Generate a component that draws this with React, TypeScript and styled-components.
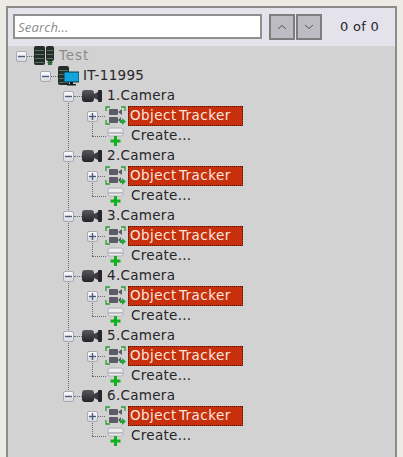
import React from 'react';
import styled, { createGlobalStyle } from 'styled-components';

const GlobalStyle = createGlobalStyle`
  html, body {
    margin: 0;
    padding: 0;
    height: 457px;
    overflow: hidden;
    background: #ecebe6;
  }
  * {
    box-sizing: border-box;
  }
`;

const Page = styled.div`
  height: 457px;
  padding: 6px 6px 0;
  font-family: 'DejaVu Sans', Verdana, sans-serif;
  font-size: 13.5px;
  color: #26262a;
`;

const Panel = styled.div`
  height: 100%;
  display: flex;
  flex-direction: column;
  border: 2px solid #8c8c8c;
  border-bottom: none;
`;

const Toolbar = styled.div`
  flex: none;
  height: 38px;
  display: flex;
  align-items: flex-start;
  padding: 6px 0 0 5px;
  background: #e4e2ea;
`;

const SearchBox = styled.div`
  width: 249px;
  height: 25px;
  display: flex;
  align-items: center;
  padding-left: 3px;
  border: 2px solid #909090;
  background: #ffffff;
  font-family: 'Open Sans', sans-serif;
  font-style: italic;
  font-size: 13px;
  letter-spacing: 0.2px;
  color: #8b8b8b;
`;

const NavGroup = styled.div`
  display: flex;
  margin-left: 7px;
  gap: 1px;
`;

const NavButton = styled.div`
  width: 26px;
  height: 26px;
  display: flex;
  align-items: center;
  justify-content: center;
  border: 2px solid #7e7e7e;
  background: #bdbcc3;
`;

const Counter = styled.div`
  margin: 5px 0 0 18px;
  font-size: 13px;
  letter-spacing: 0.3px;
`;

const Tree = styled.div`
  flex: 1;
  background: #d2d2d2;
`;

const Branch = styled.div<{ $left: number; $top: number; $bottom: number }>`
  position: relative;

  &::before {
    content: '';
    position: absolute;
    left: ${({ $left }) => $left}px;
    top: ${({ $top }) => $top}px;
    bottom: ${({ $bottom }) => $bottom}px;
    border-left: 1px dotted #6c6c6c;
  }
`;

const Row = styled.div<{ $indent: number }>`
  height: 20px;
  display: flex;
  align-items: center;
  padding-left: ${({ $indent }) => $indent}px;
`;

const Expander = styled.div`
  position: relative;
  z-index: 1;
  flex: none;
  width: 11px;
  height: 11px;
  display: flex;
  align-items: center;
  justify-content: center;
  border: 1px solid #a9a9b4;
  border-radius: 2px;
  background: linear-gradient(#fbfbfd, #d9d9e2);
`;

const Connector = styled.div<{ $width: number }>`
  flex: none;
  width: ${({ $width }) => $width}px;
  border-top: 1px dotted #6c6c6c;
`;

const IconSlot = styled.div`
  flex: none;
  width: 21px;
  height: 20px;
  display: flex;
`;

const Label = styled.span<{ $muted?: boolean }>`
  margin-left: 4px;
  padding-bottom: 2px;
  white-space: nowrap;
  letter-spacing: ${({ $muted }) => ($muted ? '0.9px' : '0.3px')};
  color: ${({ $muted }) => ($muted ? '#8c8c8c' : '#26262a')};
`;

const TrackerLabel = styled.span`
  flex: none;
  width: 115px;
  height: 20px;
  margin-left: 2px;
  padding-left: 1px;
  line-height: 16px;
  white-space: nowrap;
  word-spacing: -2.5px;
  letter-spacing: 0.45px;
  border: 1px dotted #4a1408;
  background: #c8300d;
  color: #f6e6df;
`;

const Sign = ({ open }: { open: boolean }) => (
  <svg width="7" height="7" viewBox="0 0 7 7">
    <rect x="0" y="2.8" width="7" height="1.4" fill="#4d5a78" />
    {!open && <rect x="2.8" y="0" width="1.4" height="7" fill="#4d5a78" />}
  </svg>
);

const Rack = ({ x, w, h }: { x: number; w: number; h: number }) => (
  <g>
    <rect x={x} y={0} width={w} height={h} rx="2" fill="#262c29" />
    <rect x={x + 1} y={4} width={w - 2} height="1" fill="#55755e" />
    <rect x={x + 1} y={8} width={w - 2} height="1" fill="#55755e" />
    <rect x={x + 1} y={12} width={w - 2} height="1" fill="#55755e" />
    <rect x={x + 1} y={16} width={w - 2} height="1" fill="#55755e" />
  </g>
);

const ServersIcon = () => (
  <svg width="21" height="20" viewBox="0 0 21 20">
    <Rack x={0} w={11} h={19} />
    <Rack x={12} w={8} h={15} />
    <rect x="14" y="15" width="4" height="4" fill="#2f6a3c" />
  </svg>
);

const ServerIcon = () => (
  <svg width="21" height="20" viewBox="0 0 21 20">
    <Rack x={0} w={11} h={19} />
    <rect x="6" y="6" width="15" height="10" fill="#12a4da" stroke="#0d3a4c" />
    <rect x="12" y="16" width="3" height="2" fill="#11181c" />
    <rect x="9" y="18" width="9" height="1.5" fill="#11181c" />
  </svg>
);

const CameraIcon = () => (
  <svg width="21" height="20" viewBox="0 0 21 20">
    <defs>
      <linearGradient id="cameraBody" x1="0" y1="0" x2="0" y2="1">
        <stop offset="0" stopColor="#5a5a5e" />
        <stop offset="1" stopColor="#242428" />
      </linearGradient>
    </defs>
    <rect x="0" y="4" width="12" height="12" rx="3" fill="url(#cameraBody)" />
    <path d="M12 8 L16 6 V14 L12 12 Z" fill="#3c3c42" />
    <rect x="16" y="4" width="4" height="12" rx="1" fill="#26262b" />
  </svg>
);

const TrackerIcon = () => (
  <svg width="21" height="20" viewBox="0 0 21 20">
    <g fill="none" stroke="#2aa02c" strokeWidth="1.3">
      <path d="M1 5 V1 H5" />
      <path d="M16 1 H20 V5" />
      <path d="M1 14 V18 H5" />
    </g>
    <rect x="4" y="3" width="9" height="6" rx="1" fill="#5c5c66" />
    <path d="M13 6 L17 3 V9 Z" fill="#5c5c66" />
    <rect x="4" y="11" width="9" height="6" rx="1" fill="#5c5c66" />
    <path d="M13 14 L16 11 V17 Z" fill="#5c5c66" />
    <path d="M15 14 H17 V12 L21 15.5 L17 19 V17 H15 Z" fill="#1fa838" />
  </svg>
);

const CreateIcon = () => (
  <svg width="21" height="20" viewBox="0 0 21 20">
    <rect x="2" y="2" width="15" height="8" rx="2" fill="#ededf0" stroke="#b0b0b8" />
    <rect x="2" y="6" width="15" height="2" fill="#bcbcc4" />
    <rect x="8" y="10" width="3" height="10" fill="#12b01e" />
    <rect x="4.5" y="13.5" width="10" height="3" fill="#12b01e" />
  </svg>
);

const Chevron = ({ up }: { up?: boolean }) => (
  <svg width="12" height="8" viewBox="0 0 12 8">
    <path
      d={up ? 'M2 6 L6 2.5 L10 6' : 'M2 2 L6 5.5 L10 2'}
      fill="none"
      stroke="#55555b"
      strokeWidth="1"
    />
  </svg>
);

const cameras = ['1.Camera', '2.Camera', '3.Camera', '4.Camera', '5.Camera', '6.Camera'];

const CameraNode = ({ name }: { name: string }) => (
  <Branch $left={84} $top={26} $bottom={10}>
    <Row $indent={55}>
      <Expander><Sign open /></Expander>
      <Connector $width={8} />
      <IconSlot><CameraIcon /></IconSlot>
      <Label>{name}</Label>
    </Row>
    <Row $indent={79}>
      <Expander><Sign open={false} /></Expander>
      <Connector $width={7} />
      <IconSlot><TrackerIcon /></IconSlot>
      <TrackerLabel>Object Tracker</TrackerLabel>
    </Row>
    <Row $indent={84}>
      <Connector $width={14} />
      <IconSlot><CreateIcon /></IconSlot>
      <Label>Create...</Label>
    </Row>
  </Branch>
);

const App = () => (
  <Page>
    <GlobalStyle />
    <Panel>
      <Toolbar>
        <SearchBox>Search...</SearchBox>
        <NavGroup>
          <NavButton><Chevron up /></NavButton>
          <NavButton><Chevron /></NavButton>
        </NavGroup>
        <Counter>0 of 0</Counter>
      </Toolbar>
      <Tree>
        <Row $indent={8}>
          <Expander><Sign open /></Expander>
          <Connector $width={7} />
          <IconSlot><ServersIcon /></IconSlot>
          <Label $muted>Test</Label>
        </Row>
        <Row $indent={32}>
          <Expander><Sign open /></Expander>
          <Connector $width={7} />
          <IconSlot><ServerIcon /></IconSlot>
          <Label>IT-11995</Label>
        </Row>
        <Branch $left={60} $top={6} $bottom={50}>
          {cameras.map((name) => (
            <CameraNode key={name} name={name} />
          ))}
        </Branch>
      </Tree>
    </Panel>
  </Page>
);

export default App;
